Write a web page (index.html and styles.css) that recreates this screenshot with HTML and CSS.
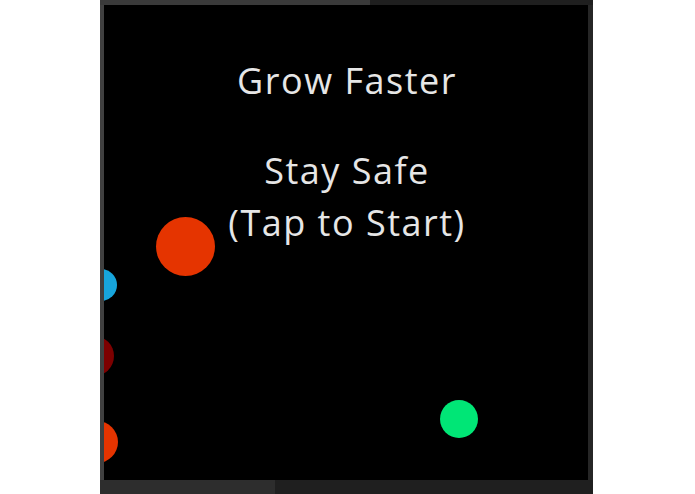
FILE: index.html
```html
<!DOCTYPE html>
<html>
<head>
<meta charset="utf-8">
<link rel="stylesheet" href="styles.css">
</head>
<body>
<div class="frame">
  <div class="screen">
    <div class="title">Grow Faster</div>
    <div class="subtitle">Stay Safe<br>(Tap to Start)</div>
    <span class="dot red big"></span>
    <span class="dot blue"></span>
    <span class="dot darkred"></span>
    <span class="dot red edge"></span>
    <span class="dot green"></span>
  </div>
</div>
</body>
</html>
```
FILE: styles.css
```css
html, body {
  margin: 0;
  padding: 0;
  background: #ffffff;
}
.frame {
  margin-left: 100px;
  width: 493px;
  height: 494px;
  box-sizing: border-box;
  padding: 5px 5px 14px 4px;
  background:
    linear-gradient(to right, #3a3a3a 0 270px, #1f1f1f 270px) top / 100% 5px no-repeat,
    linear-gradient(to right, #2d2d2d 0 175px, #1f1f1f 175px) bottom / 100% 14px no-repeat,
    linear-gradient(to right, #404040 0 4px, #262626 4px);
}
.screen {
  position: relative;
  width: 100%;
  height: 100%;
  background: #000;
  overflow: hidden;
  font-family: "Open Sans", "Noto Sans", sans-serif;
  color: #e6e6e6;
  text-align: center;
  font-size: 36px;
  line-height: 52px;
  letter-spacing: 1.5px;
  padding-left: 2px;
  box-sizing: border-box;
}
.title {
  padding-top: 50px;
}
.subtitle {
  margin-top: 38px;
}
.dot {
  position: absolute;
  border-radius: 50%;
}
.red { background: #e53400; }
.big { left: 52px; top: 212px; width: 59px; height: 59px; }
.blue { background: #17a5dc; left: -19px; top: 264px; width: 32px; height: 32px; }
.darkred { background: #7d0000; left: -30px; top: 331px; width: 40px; height: 40px; }
.edge { left: -28px; top: 416px; width: 42px; height: 42px; }
.green { background: #00e676; left: 336px; top: 395px; width: 38px; height: 38px; }
```
